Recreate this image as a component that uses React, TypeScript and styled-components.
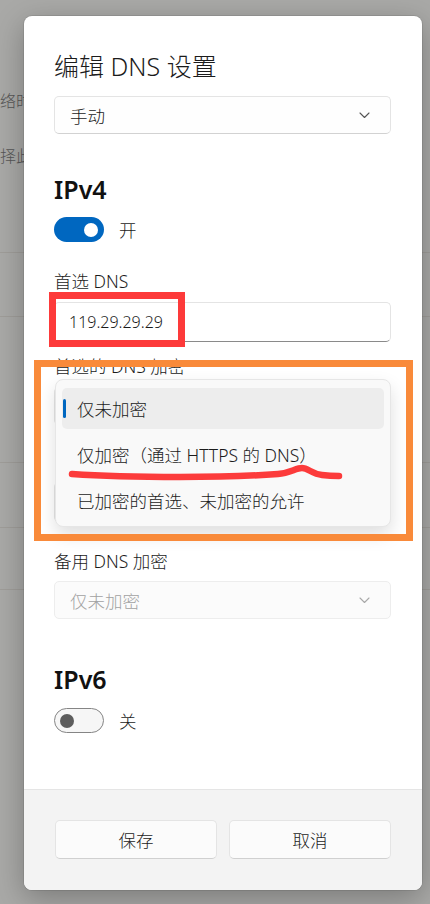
import React from "react";
import styled, { createGlobalStyle } from "styled-components";

const GlobalStyle = createGlobalStyle`
  html, body { margin: 0; padding: 0; }
  body {
    width: 430px;
    height: 904px;
    overflow: hidden;
    font-family: "Noto Sans", "Noto Sans CJK SC", sans-serif;
    font-weight: 300;
    color: #1b1b1b;
  }
`;

const Page = styled.div`
  position: relative;
  width: 430px;
  height: 904px;
  background: #a9a9a7;
  overflow: hidden;
`;

const Backdrop = styled.div`
  display: flex;
  flex-direction: column;
  padding-top: 88px;
`;

const BgText = styled.div<{ $mt?: number }>`
  font-size: 16px;
  line-height: 24px;
  color: #565656;
  white-space: nowrap;
  margin-top: ${(p) => p.$mt ?? 0}px;
  font-family: "Noto Sans CJK SC", sans-serif;
`;

const BgRow = styled.div<{ $h: number }>`
  height: ${(p) => p.$h}px;
  border-bottom: 1px solid #9f9d99;
`;

const Dialog = styled.div`
  position: absolute;
  left: 24px;
  top: 16px;
  width: 398px;
  height: 874px;
  background: #ffffff;
  border-radius: 8px;
  box-shadow: 0 8px 30px rgba(0, 0, 0, 0.28), 0 0 0 1px rgba(0, 0, 0, 0.08);
  display: flex;
  flex-direction: column;
  overflow: hidden;
`;

const Body = styled.div`
  flex: 1;
  display: flex;
  flex-direction: column;
  padding: 34px 31px 0 30px;
`;

const Title = styled.h1`
  margin: 0;
  font-size: 25px;
  line-height: 32px;
  font-weight: 300;
  color: #1b1b1b;
`;

const Heading = styled.h2<{ $mt: number }>`
  margin: ${(p) => p.$mt}px 0 0;
  font-size: 25px;
  line-height: 28px;
  font-weight: 600;
  color: #111;
`;

const Label = styled.div<{ $mt: number }>`
  margin-top: ${(p) => p.$mt}px;
  height: 22px;
  font-size: 17.5px;
  line-height: 22px;
  color: #1b1b1b;
`;

const Field = styled.div<{ $mt: number }>`
  position: relative;
  margin-top: ${(p) => p.$mt}px;
`;

const SelectBox = styled.div<{ $disabled?: boolean }>`
  height: 38px;
  box-sizing: border-box;
  display: flex;
  align-items: center;
  justify-content: space-between;
  padding: 0 20px 0 15px;
  border: 1px solid ${(p) => (p.$disabled ? "#ededed" : "#e4e4e4")};
  border-bottom-color: ${(p) => (p.$disabled ? "#ededed" : "#d2d2d2")};
  border-radius: 5px;
  background: ${(p) => (p.$disabled ? "#fbfbfb" : "#fefefe")};
  font-size: 17.5px;
  color: ${(p) => (p.$disabled ? "#a2a2a2" : "#1b1b1b")};
`;

const InputBox = styled.div`
  height: 40px;
  box-sizing: border-box;
  display: flex;
  align-items: center;
  padding: 0 14px;
  border: 1px solid #e4e4e4;
  border-bottom-color: #8a8a8a;
  border-radius: 5px;
  background: #ffffff;
  font-size: 16px;
  color: #1b1b1b;
`;

const ToggleRow = styled.div<{ $mt: number }>`
  margin-top: ${(p) => p.$mt}px;
  display: flex;
  align-items: center;
  gap: 15px;
  font-size: 17.5px;
  height: 25px;
`;

const Toggle = styled.div<{ $on: boolean }>`
  width: 50px;
  height: 25px;
  box-sizing: border-box;
  border-radius: 13px;
  display: flex;
  align-items: center;
  justify-content: ${(p) => (p.$on ? "flex-end" : "flex-start")};
  padding: 0 5px;
  background: ${(p) => (p.$on ? "#0067c0" : "#f6f6f6")};
  border: ${(p) => (p.$on ? "none" : "1px solid #858585")};
`;

const Knob = styled.div<{ $on: boolean }>`
  width: 14px;
  height: 14px;
  border-radius: 50%;
  background: ${(p) => (p.$on ? "#ffffff" : "#5d5d5d")};
  margin: ${(p) => (p.$on ? "0 1px 0 0" : "0")};
`;

const Popup = styled.div`
  position: absolute;
  left: 1px;
  top: -8px;
  width: 336px;
  height: 148px;
  box-sizing: border-box;
  padding: 8px 6px 5px 6px;
  display: flex;
  flex-direction: column;
  gap: 5px;
  background: #f9f9f9;
  border: 1px solid #e6e6e6;
  border-radius: 8px;
  box-shadow: 0 8px 18px rgba(0, 0, 0, 0.13);
  z-index: 2;
`;

const Item = styled.div<{ $selected?: boolean }>`
  position: relative;
  height: 41px;
  flex-shrink: 0;
  display: flex;
  align-items: center;
  padding-left: 15px;
  border-radius: 5px;
  background: ${(p) => (p.$selected ? "#ededed" : "transparent")};
  font-size: 17.5px;
  color: #1b1b1b;
  white-space: nowrap;
`;

const Indicator = styled.span`
  position: absolute;
  left: 1px;
  top: 11px;
  width: 3px;
  height: 19px;
  border-radius: 2px;
  background: #0067c0;
`;

const Footer = styled.div`
  height: 101px;
  box-sizing: border-box;
  border-top: 1px solid #e5e5e5;
  background: #f3f3f3;
  display: grid;
  grid-template-columns: 1fr 1fr;
  column-gap: 12px;
  padding: 30px 31px 0 31px;
  align-items: start;
`;

const Button = styled.button`
  height: 39px;
  box-sizing: border-box;
  border: 1px solid #e4e4e4;
  border-bottom-color: #d0d0d0;
  border-radius: 5px;
  background: #fbfbfb;
  font-family: "Noto Sans", "Noto Sans CJK SC", sans-serif;
  font-weight: 300;
  font-size: 17.5px;
  color: #1b1b1b;
  padding: 0;
`;

const Annotation = styled.div<{ $color: string }>`
  position: absolute;
  box-sizing: border-box;
  border: 7px solid ${(p) => p.$color};
  pointer-events: none;
  z-index: 5;
`;

const Scribble = styled.svg`
  position: absolute;
  left: 0;
  top: 0;
  pointer-events: none;
  z-index: 6;
`;

const Chevron = ({ color }: { color: string }) => (
  <svg width="11" height="7" viewBox="0 0 11 7" fill="none">
    <path d="M1 1 L5.5 5.5 L10 1" stroke={color} strokeWidth="1.1" strokeLinecap="round" strokeLinejoin="round" />
  </svg>
);

export default function App() {
  return (
    <>
      <GlobalStyle />
      <Page>
        <Backdrop>
          <BgText>络时</BgText>
          <BgText $mt={31}>择此</BgText>
          <BgRow $h={85} />
          <BgRow $h={63} />
          <BgRow $h={145} />
          <BgRow $h={64} />
          <BgRow $h={61} />
        </Backdrop>

        <Dialog>
          <Body>
            <Title>编辑 DNS 设置</Title>
            <Field $mt={14}>
              <SelectBox>
                <span>手动</span>
                <Chevron color="#555" />
              </SelectBox>
            </Field>

            <Heading $mt={41}>IPv4</Heading>
            <ToggleRow $mt={14}>
              <Toggle $on>
                <Knob $on />
              </Toggle>
              <span>开</span>
            </ToggleRow>

            <Label $mt={28}>首选 DNS</Label>
            <Field $mt={10}>
              <InputBox>119.29.29.29</InputBox>
            </Field>

            <Label $mt={13}>首选的 DNS 加密</Label>
            <Field $mt={10}>
              <SelectBox>
                <span />
                <Chevron color="#555" />
              </SelectBox>
              <Popup>
                <Item $selected>
                  <Indicator />
                  仅未加密
                </Item>
                <Item>仅加密（通过 HTTPS 的 DNS）</Item>
                <Item>已加密的首选、未加密的允许</Item>
              </Popup>
            </Field>

            <Label $mt={25} />
            <Field $mt={10}>
              <InputBox />
            </Field>

            <Label $mt={28}>备用 DNS 加密</Label>
            <Field $mt={9}>
              <SelectBox $disabled>
                <span>仅未加密</span>
                <Chevron color="#a8a8a8" />
              </SelectBox>
            </Field>

            <Heading $mt={46}>IPv6</Heading>
            <ToggleRow $mt={15}>
              <Toggle $on={false}>
                <Knob $on={false} />
              </Toggle>
              <span>关</span>
            </ToggleRow>
          </Body>
          <Footer>
            <Button>保存</Button>
            <Button>取消</Button>
          </Footer>
        </Dialog>

        <Annotation $color="#fd3a3a" style={{ left: 49, top: 292, width: 136, height: 55 }} />
        <Annotation $color="#f98a3a" style={{ left: 34, top: 360, width: 379, height: 181 }} />
        <Scribble width="430" height="904" viewBox="0 0 430 904">
          <path
            d="M72 474 C 100 476, 140 477, 180 477 C 220 477, 250 476, 278 474 C 290 473, 296 468, 302 468 C 308 468, 312 474, 322 475 C 330 476, 334 476, 339 476"
            stroke="#fc3b3b"
            strokeWidth="6.5"
            strokeLinecap="round"
            fill="none"
          />
        </Scribble>
      </Page>
    </>
  );
}
